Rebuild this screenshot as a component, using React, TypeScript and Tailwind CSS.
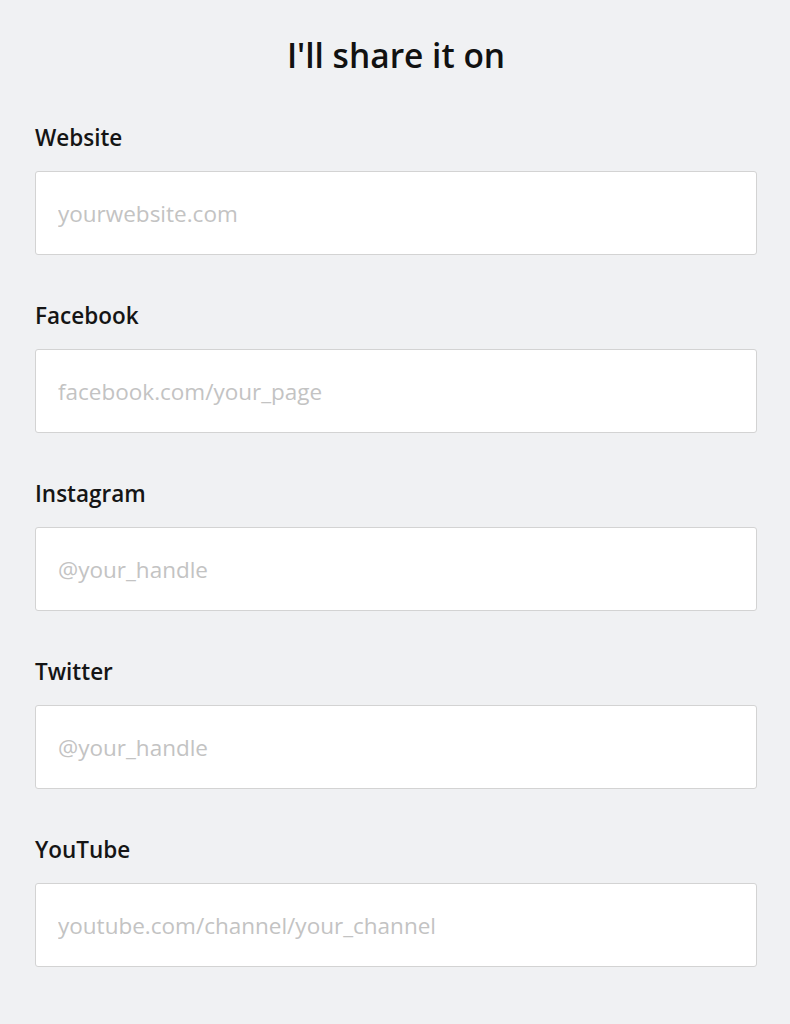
import React from 'react';

const fields = [
  { label: 'Website', placeholder: 'yourwebsite.com' },
  { label: 'Facebook', placeholder: 'facebook.com/your_page' },
  { label: 'Instagram', placeholder: '@your_handle' },
  { label: 'Twitter', placeholder: '@your_handle' },
  { label: 'YouTube', placeholder: 'youtube.com/channel/your_channel' },
];

const App: React.FC = () => {
  return (
    <div
      className="min-h-[1024px] bg-[#f0f1f3] pl-[35px] pr-[33px] pt-[35px]"
      style={{ fontFamily: '"Open Sans", sans-serif' }}
    >
      <h1 className="text-center text-[33.5px] leading-[40px] font-semibold text-[#111]">
        I'll share it on
      </h1>

      <div className="mt-[49px] flex flex-col gap-[47px]">
        {fields.map((field) => (
          <div key={field.label}>
            <label className="block text-[22.5px] leading-[28px] font-semibold text-[#151515] mb-[19px]">
              {field.label}
            </label>
            <input
              type="text"
              placeholder={field.placeholder}
              className="block w-full h-[84px] px-[22px] bg-white border border-[#d3d3d3] rounded-[3px] text-[22.5px] text-[#333] placeholder:text-[#c3c3c3] focus:outline-none"
            />
          </div>
        ))}
      </div>
    </div>
  );
};

export default App;
